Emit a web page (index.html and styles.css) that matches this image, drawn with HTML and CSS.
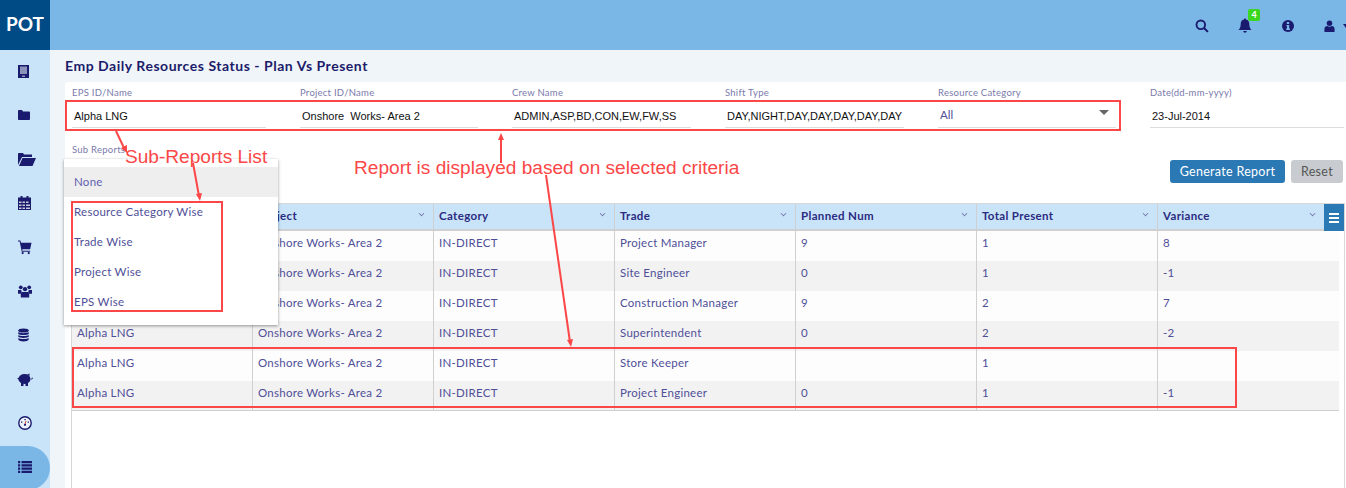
FILE: index.html
```html
<!DOCTYPE html>
<html lang="en">
<head>
  <meta charset="UTF-8" />
  <title>Emp Daily Resources Status</title>
  <link rel="stylesheet" href="styles.css">
</head>
<body>
  <header class="topbar">
    <div class="logo">POT</div>
    <div class="top-icons">
      <svg class="top-icon" width="14" height="14" viewBox="0 0 15 15"><circle cx="6.2" cy="6.2" r="4.6" fill="none" stroke="#1a1a6e" stroke-width="2"/><path d="M9.6 9.6l4.2 4.2" stroke="#1a1a6e" stroke-width="2.2" fill="none"/></svg>
      <span class="bell">
        <svg width="14" height="15" viewBox="0 0 14 15"><path d="M7 0.5c.7 0 1 .5 1 1 2.2.4 3.3 2.2 3.3 4.5 0 3 .8 4.600 2.200 6H.5c1.400-1.400 2.200-3 2.200-6 0-2.300 1.100-4.100 3.300-4.500 0-.5.300-1 1-1zM5.300 13h3.400c0 1-.7 1.700-1.700 1.700S5.300 14 5.300 13z" fill="#1a1a6e"/></svg>
        <span class="badge">4</span>
      </span>
      <svg class="top-icon" width="12" height="12" viewBox="0 0 13 13"><circle cx="6.500" cy="6.500" r="6.500" fill="#1a1a6e"/><path d="M5.200 2.300h2.600v2H5.200zM4.800 5.400h3v3.800h.9v1.500H4.500V9.200h.9V6.900h-.6z" fill="#7ab6e6"/></svg>
      <span class="user">
        <svg width="11" height="12" viewBox="0 0 12 13"><circle cx="6" cy="3.500" r="3" fill="#1a1a6e"/><path d="M0.500 13V9.500C.5 7.500 2 6.500 3.500 6.500c1.500 1 3.500 1 5 0 1.500 0 3 1 3 3V13z" fill="#1a1a6e"/></svg>
        <i class="caret"></i>
      </span>
    </div>
  </header>

  <div class="layout">
    <nav class="sidebar">
      <div class="nav-item">
        <svg width="11" height="13" viewBox="0 0 11 13"><path d="M0 0h11v13H0z" fill="#1a1a6e"/><path d="M2 1.500h7v7.500H2zM4 10.500h3V12H4z" fill="#8b93b8"/></svg>
      </div>
      <div class="nav-item">
        <svg width="12" height="10" viewBox="0 0 12 10"><path d="M0 1c0-.5.400-1 1-1h3l1 1.500h6c.5 0 1 .5 1 1V9c0 .5-.5 1-1 1H1c-.6 0-1-.5-1-1z" fill="#1a1a6e"/></svg>
      </div>
      <div class="nav-item">
        <svg width="18" height="13" viewBox="0 0 18 13"><path d="M0 12V1c0-.5.400-1 1-1h4l1 1.500h8V4H4z" fill="#1a1a6e"/><path d="M4.500 5H18l-3.500 8H1z" fill="#1a1a6e"/></svg>
      </div>
      <div class="nav-item">
        <svg width="13" height="14" viewBox="0 0 13 14"><path d="M0 1.500h2.500V0h2v1.500h4V0h2v1.500H13V14H0z" fill="#1a1a6e"/><path d="M1 5.500h2.500v1.500H1zM4.500 5.500H7v1.500H4.500zM8 5.500h2.500v1.500H8zM1 8.500h2.500V10H1zM4.500 8.500H7V10H4.500zM8 8.500h4V10H8zM1 11.500h2.500V13H1zM4.500 11.500H7V13H4.500zM8 11.500h4V13H8z" fill="#c9c9d8"/></svg>
      </div>
      <div class="nav-item">
        <svg width="14" height="15" viewBox="0 0 15 15"><path d="M0 0h2.500l.8 2.500H14.500l-1.500 7H4.500l.3 1.500H13v1H4L1.800 1H0z" fill="#1a1a6e"/><circle cx="5" cy="13.500" r="1.200" fill="#1a1a6e"/><circle cx="11.500" cy="13.500" r="1.200" fill="#1a1a6e"/></svg>
      </div>
      <div class="nav-item">
        <svg width="14" height="13" viewBox="0 0 15 13"><circle cx="3" cy="2" r="2" fill="#1a1a6e"/><circle cx="12" cy="2" r="2" fill="#1a1a6e"/><circle cx="7.500" cy="4" r="2.300" fill="#1a1a6e"/><path d="M0 5h3.500L4 7.500 3 9H0zM15 5h-3.500L11 7.500 12 9h3z" fill="#1a1a6e"/><path d="M4 7h7l1 2v4H3V9z" fill="#1a1a6e"/></svg>
      </div>
      <div class="nav-item">
        <svg width="11" height="14" viewBox="0 0 12 14"><ellipse cx="6" cy="2.200" rx="5.700" ry="2.200" fill="#1a1a6e"/><path d="M.3 3.800c1.500 1.600 9.900 1.600 11.400 0v2c-1.500 1.600-9.900 1.600-11.400 0zM.3 7c1.500 1.600 9.900 1.600 11.400 0v2c-1.500 1.600-9.900 1.600-11.400 0zM.3 10.200c1.500 1.600 9.900 1.600 11.400 0v1.600c-1 2.900-10.400 2.900-11.400 0z" fill="#1a1a6e"/></svg>
      </div>
      <div class="nav-item pig">
        <svg width="16" height="13" viewBox="0 0 16 13"><ellipse cx="7.500" cy="6" rx="6" ry="5" fill="#1a1a6e"/><path d="M10 1.500l2.500-1V3zM4 9h2.500v4H4zM8.500 9H11v4H8.500zM0 5.500l2.500-1v2.500z" fill="#1a1a6e"/><path d="M14 6c1.300.3 1.700-.5 1.400-1.300" stroke="#1a1a6e" fill="none"/></svg>
      </div>
      <div class="nav-item">
        <svg width="14" height="14" viewBox="0 0 14 14"><circle cx="7" cy="7" r="6.200" fill="#eef4fb" stroke="#1a1a6e" stroke-width="1.400"/><path d="M3 5.500h1.300v1.300H3zM9.700 5.500H11v1.300H9.700zM6.400 3h1.300v1.300H6.400z" fill="#1a1a6e"/><path d="M7 8l1-3" stroke="#c43" fill="none"/><circle cx="7" cy="8.800" r="1.100" fill="#1a1a6e"/></svg>
      </div>
      <div class="nav-item active">
        <svg width="14" height="12" viewBox="0 0 14 12"><path d="M0 0h2.200v2.200H0zM3.500 0H14v2.200H3.500zM0 3.200h2.200v2.200H0zM3.500 3.200H14v2.200H3.500zM0 6.500h2.200v2.200H0zM3.500 6.500H14v2.200H3.500zM0 9.800h2.200V12H0zM3.500 9.800H14V12H3.500z" fill="#1a1a6e"/></svg>
      </div>
    </nav>

    <main class="content">
      <h1 class="page-title">Emp Daily Resources Status - Plan Vs Present</h1>
      <section class="card">
        <div class="filters">
          <div class="field">
            <label>EPS ID/Name</label>
            <div class="value">Alpha LNG</div>
          </div>
          <div class="field">
            <label>Project ID/Name</label>
            <div class="value">Onshore&nbsp; Works- Area 2</div>
          </div>
          <div class="field">
            <label>Crew Name</label>
            <div class="value">ADMIN,ASP,BD,CON,EW,FW,SS</div>
          </div>
          <div class="field">
            <label>Shift Type</label>
            <div class="value">DAY,NIGHT,DAY,DAY,DAY,DAY,DAY</div>
          </div>
          <div class="field">
            <label>Resource Category</label>
            <div class="value select"><span>All</span><i class="select-arrow"></i></div>
          </div>
          <div class="field">
            <label>Date(dd-mm-yyyy)</label>
            <div class="value">23-Jul-2014</div>
          </div>
        </div>

        <div class="actions-row">
          <label class="sub-label">Sub Reports</label>
          <div class="buttons">
            <button class="btn primary">Generate Report</button>
            <button class="btn grey">Reset</button>
          </div>
        </div>

        <div class="grid-wrap">
          <div class="grid-head">
            <div class="th">EPS<i class="chev"></i></div>
            <div class="th">Project<i class="chev"></i></div>
            <div class="th">Category<i class="chev"></i></div>
            <div class="th">Trade<i class="chev"></i></div>
            <div class="th">Planned Num<i class="chev"></i></div>
            <div class="th">Total Present<i class="chev"></i></div>
            <div class="th">Variance<i class="chev"></i></div>
            <div class="th-menu"><b></b><b></b><b></b></div>
          </div>
          <div class="row">
            <div>Alpha LNG</div><div>Onshore Works- Area 2</div><div>IN-DIRECT</div><div>Project Manager</div><div>9</div><div>1</div><div>8</div>
          </div>
          <div class="row">
            <div>Alpha LNG</div><div>Onshore Works- Area 2</div><div>IN-DIRECT</div><div>Site Engineer</div><div>0</div><div>1</div><div>-1</div>
          </div>
          <div class="row">
            <div>Alpha LNG</div><div>Onshore Works- Area 2</div><div>IN-DIRECT</div><div>Construction Manager</div><div>9</div><div>2</div><div>7</div>
          </div>
          <div class="row">
            <div>Alpha LNG</div><div>Onshore Works- Area 2</div><div>IN-DIRECT</div><div>Superintendent</div><div>0</div><div>2</div><div>-2</div>
          </div>
          <div class="row">
            <div>Alpha LNG</div><div>Onshore Works- Area 2</div><div>IN-DIRECT</div><div>Store Keeper</div><div></div><div>1</div><div></div>
          </div>
          <div class="row">
            <div>Alpha LNG</div><div>Onshore Works- Area 2</div><div>IN-DIRECT</div><div>Project Engineer</div><div>0</div><div>1</div><div>-1</div>
          </div>
        </div>
      </section>
    </main>
  </div>

  <!-- dropdown open over the grid -->
  <ul class="sub-menu">
    <li class="selected">None</li>
    <li>Resource Category Wise</li>
    <li>Trade Wise</li>
    <li>Project Wise</li>
    <li>EPS Wise</li>
  </ul>

  <!-- red callouts drawn on top of the page -->
  <div class="mark mark-filters"></div>
  <div class="mark mark-list"></div>
  <div class="mark mark-rows"></div>
  <svg class="arrows" width="1346" height="488" viewBox="0 0 1346 488">
    <g stroke="#fb4747" stroke-width="2" fill="none">
      <path d="M116 131l9 19"/>
      <path d="M193 163l6 33"/>
      <path d="M501 163v-25"/>
      <path d="M546 175l24 167"/>
    </g>
    <g fill="#fb4747">
      <path d="M127 153l-6-5 6-3z"/>
      <path d="M200 201l-4-7 6-1z"/>
      <path d="M501 133l3 7h-6z"/>
      <path d="M571 347l-4-7 6-1z"/>
    </g>
  </svg>
  <div class="note note-list">Sub-Reports List</div>
  <div class="note note-report">Report is displayed based on selected criteria</div>
</body>
</html>
```

FILE: styles.css
```css
* {
  box-sizing: border-box;
}
html, body {
  height: 488px;
  overflow: hidden;
}
body {
  margin: 0;
  font-family: Lato, "Open Sans", sans-serif;
  color: #4f4f98;
  background: #fff;
  position: relative;
}
.topbar {
  height: 50px;
  background: #7ab6e6;
  display: flex;
  justify-content: space-between;
  align-items: center;
}
.logo {
  width: 50px;
  height: 50px;
  background: #004b85;
  color: #fff;
  font-size: 19px;
  font-weight: 700;
  line-height: 47px;
  text-align: center;
}
.top-icons {
  display: flex;
  align-items: center;
  margin-top: 1px;
  width: 151px;
}
.top-icons > * {
  flex: none;
}
.top-icon {
  display: block;
}
.bell {
  position: relative;
  display: block;
  height: 15px;
  margin-left: 29px;
}
.bell svg {
  display: block;
}
.badge {
  position: absolute;
  left: 10px;
  top: -9px;
  width: 12px;
  height: 12px;
  background: #3bd71f;
  border-radius: 2px;
  color: #fff;
  font-size: 9px;
  font-weight: 700;
  line-height: 12px;
  text-align: center;
}
.bell + .top-icon {
  margin-left: 30px;
}
.user {
  display: flex;
  align-items: center;
  margin-left: 30px;
}
.caret {
  width: 0;
  height: 0;
  margin-left: 8px;
  border-left: 3px solid transparent;
  border-right: 3px solid transparent;
  border-top: 4px solid #1a1a6e;
}
.layout {
  display: flex;
  height: 438px;
}
.sidebar {
  width: 50px;
  flex: none;
  background: #c9e4f9;
  overflow: hidden;
}
.nav-item {
  height: 44px;
  padding-bottom: 2px;
  padding-left: 18px;
  display: flex;
  align-items: center;
}
.nav-item.pig {
  padding-left: 17px;
}
.nav-item.active {
  background: #7ab6e6;
  border-radius: 0 22px 22px 0;
}
.content {
  flex: 1;
  min-width: 0;
  background: #f0f5f9;
  padding: 0 0 0 15px;
}
.page-title {
  margin: 0;
  height: 32px;
  font-size: 14px;
  font-weight: 700;
  line-height: 32px;
  letter-spacing: 0.53px;
  color: #1c1c6b;
}
.card {
  height: 406px;
  background: #fff;
  border-radius: 3px 0 0 0;
  padding: 5px 1px 0 7px;
}
.filters {
  display: grid;
  grid-template-columns: 194px 178px 179px 179px 178px 194px;
  column-gap: 34px;
}
.field label {
  display: block;
  height: 12px;
  font-size: 9.500px;
  line-height: 12px;
  letter-spacing: 0.25px;
  color: #7a7aac;
}
.value {
  height: 29px;
  padding: 11px 2px 0;
  border-bottom: 1px solid #ddd;
  font-family: "Liberation Sans", Arial, sans-serif;
  font-size: 11px;
  line-height: 13px;
  color: #111;
  white-space: nowrap;
  overflow: hidden;
}
.value.select {
  display: flex;
  justify-content: space-between;
  padding-top: 9px;
  padding-right: 7px;
  font-family: Lato, sans-serif;
  font-size: 11.500px;
  color: #4f4f98;
}
.select-arrow {
  width: 0;
  height: 0;
  margin-top: 2px;
  border-left: 5px solid transparent;
  border-right: 5px solid transparent;
  border-top: 5px solid #666;
}
.actions-row {
  height: 75px;
  position: relative;
}
.sub-label {
  display: block;
  padding-top: 16px;
  font-size: 9.500px;
  line-height: 12px;
  letter-spacing: 0.25px;
  color: #7a7aac;
}
.buttons {
  position: absolute;
  right: 2px;
  top: 32px;
  display: flex;
  gap: 6px;
}
.btn {
  height: 23px;
  border: 0;
  border-radius: 3px;
  font-family: Lato, sans-serif;
  font-size: 12.500px;
  letter-spacing: 0.3px;
  padding: 0;
}
.btn.primary {
  width: 115px;
  background: #2a79b5;
  color: #fff;
}
.btn.grey {
  width: 52px;
  background: #c8ccd0;
  color: #555;
}
.grid-wrap {
  height: 290px;
  border: 1px solid #d8d8d8;
  border-bottom: 0;
  margin-left: -1px;
}
.grid-head {
  display: grid;
  grid-template-columns: 180px repeat(5, 181px) 167px 20px;
  height: 27px;
  background: #c9e4f9;
  border-bottom: 2px solid #d0d0d0;
}
.th {
  position: relative;
  padding-left: 5px;
  border-left: 1px solid #d0d0d0;
  font-size: 11.500px;
  font-weight: 700;
  line-height: 24px;
  letter-spacing: 0.35px;
  color: #2b2b80;
}
.th:first-child {
  border-left: 0;
}
.chev {
  position: absolute;
  right: 9px;
  top: 7px;
  width: 5px;
  height: 5px;
  border-right: 1px solid #6a6aa0;
  border-bottom: 1px solid #6a6aa0;
  transform: rotate(45deg) scale(0.8);
}
.th-menu {
  background: #2a79b5;
  margin-bottom: -2px;
  display: flex;
  flex-direction: column;
  justify-content: center;
  align-items: center;
  gap: 2px;
}
.th-menu b {
  display: block;
  width: 10px;
  height: 2px;
  background: #fff;
}
.row {
  display: grid;
  grid-template-columns: 180px repeat(5, 181px) 182px;
  width: 1267px;
  height: 30px;
  background: #fdfdfd;
  font-size: 11.500px;
  line-height: 24px;
  letter-spacing: 0.26px;
}
.row:nth-child(odd) {
  background: #f2f2f2;
}
.row:last-child {
  border-bottom: 1px solid #d0d0d0;
}
.row > div {
  padding-left: 5px;
  border-left: 1px solid #d0d0d0;
}
.row > div:first-child {
  border-left: 0;
}
.sub-menu {
  position: absolute;
  left: 64px;
  top: 159px;
  width: 214px;
  height: 166px;
  margin: 0;
  padding: 8px 0 0;
  list-style: none;
  background: #fff;
  box-shadow: 0 1px 3px rgba(0, 0, 0, 0.4);
  font-size: 11.500px;
  letter-spacing: 0.26px;
}
.sub-menu li {
  height: 30px;
  line-height: 30px;
  padding-left: 10px;
}
.sub-menu li.selected {
  background: #eee;
  color: #5f5fb0;
}
.mark {
  position: absolute;
  border: 2px solid #fb4747;
}
.mark-filters {
  left: 65px;
  top: 100px;
  width: 1056px;
  height: 31px;
}
.mark-list {
  left: 71px;
  top: 201px;
  width: 152px;
  height: 111px;
}
.mark-rows {
  left: 72px;
  top: 347px;
  width: 1165px;
  height: 61px;
}
.arrows {
  position: absolute;
  left: 0;
  top: 0;
  pointer-events: none;
}
.note {
  position: absolute;
  font-family: "Liberation Sans", Arial, sans-serif;
  font-size: 19.100px;
  line-height: 20px;
  color: #fb4747;
  white-space: nowrap;
}
.note-list {
  left: 125px;
  top: 147px;
}
.note-report {
  left: 354px;
  top: 158px;
}
```
